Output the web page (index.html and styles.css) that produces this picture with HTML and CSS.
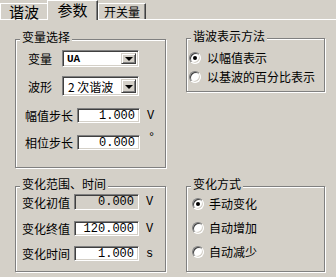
FILE: index.html
```html
<!DOCTYPE html>
<html lang="zh">
<head>
<meta charset="utf-8">
<title>参数</title>
<link rel="stylesheet" href="styles.css">
</head>
<body>
<div class="window">
  <div class="tabs">
    <div class="tab t1">谐波</div>
    <div class="tab t2 active">参数</div>
    <div class="tab t3">开关量</div>
  </div>
  <div class="panel">
    <div class="group g1">
      <span class="legend">变量选择</span>
      <div class="row r1a">
        <span class="lbl lbl-s">变量</span>
        <div class="combo c1"><span class="cval mono">UA</span><span class="cbtn"><i class="arrow"></i></span></div>
      </div>
      <div class="row r1b">
        <span class="lbl lbl-s">波形</span>
        <div class="combo c2"><span class="cval big">2 次谐波</span><span class="cbtn"><i class="arrow"></i></span></div>
      </div>
      <div class="row r1c">
        <span class="lbl lbl-l">幅值步长</span>
        <div class="edit e1 mono">1.000</div>
        <span class="unit mono">V</span>
      </div>
      <div class="row r1d">
        <span class="lbl lbl-l">相位步长</span>
        <div class="edit e1 mono">0.000</div>
        <span class="unit deg mono">°</span>
      </div>
    </div>
    <div class="group g2">
      <span class="legend">谐波表示方法</span>
      <div class="opt o2a"><span class="radio on"></span><span>以幅值表示</span></div>
      <div class="opt o2b"><span class="radio"></span><span>以基波的百分比表示</span></div>
    </div>
    <div class="group g3">
      <span class="legend">变化范围、时间</span>
      <div class="row r3a">
        <span class="lbl lbl-m">变化初值</span>
        <div class="edit e3 disabled mono">0.000</div>
        <span class="unit mono">V</span>
      </div>
      <div class="row r3b">
        <span class="lbl lbl-m">变化终值</span>
        <div class="edit e3 mono">120.000</div>
        <span class="unit mono">V</span>
      </div>
      <div class="row r3c">
        <span class="lbl lbl-m">变化时间</span>
        <div class="edit e3 mono">1.000</div>
        <span class="unit mono">s</span>
      </div>
    </div>
    <div class="group g4">
      <span class="legend">变化方式</span>
      <div class="opt o4a"><span class="radio on"></span><span>手动变化</span></div>
      <div class="opt o4b"><span class="radio"></span><span>自动增加</span></div>
      <div class="opt o4c"><span class="radio"></span><span>自动减少</span></div>
    </div>
  </div>
</div>
</body>
</html>
```

FILE: styles.css
```css
* { box-sizing: border-box; }
html, body { margin: 0; padding: 0; }
body {
  background: #d4d0c8;
  font-family: "Noto Sans CJK SC", "Noto Sans CJK JP", sans-serif;
  font-size: 12px;
  color: #000;
}
.window { width: 336px; height: 277px; overflow: hidden; }

.mono { font-family: "Liberation Mono", "DejaVu Sans Mono", monospace; }

/* tabs */
.tabs {
  display: flex;
  align-items: flex-end;
  height: 19px;
  position: relative;
  z-index: 2;
}
.tab {
  height: 16px;
  text-align: center;
  border-top: 1px solid #fff;
  border-left: 1px solid #fff;
  border-right: 1px solid #404040;
  box-shadow: inset -1px 0 0 #808080;
  background: #d4d0c8;
  white-space: nowrap;
}
.t1 {
  width: 47px;
  font-size: 15px;
  line-height: 15px;
  border-right: none;
  box-shadow: none;
}
.t2 { width: 51px; font-size: 15px; }
.t3 { width: 48px; font-size: 12px; line-height: 15px; }
.tab.active {
  height: 20px;
  margin-bottom: -1px;
  line-height: 15px;
  padding-top: 1px;
}

/* panel */
.panel {
  border-top: 1px solid #fff;
  padding: 19px 0 0 15px;
  display: grid;
  grid-template-columns: 151px 139px;
  grid-template-rows: 129px 86px;
  column-gap: 20px;
  row-gap: 18px;
  align-items: start;
}

.group {
  position: relative;
  border: 1px solid #808080;
  box-shadow: inset 1px 1px 0 #fff, 1px 1px 0 #fff;
  display: flex;
  flex-direction: column;
}
.g1 { height: 129px; }
.g2 { height: 54px; margin-top: -1px; }
.g3, .g4 { height: 86px; }

.legend {
  position: absolute;
  top: -10px;
  left: 4px;
  padding: 0 2px;
  line-height: 14px;
  background: #d4d0c8;
  white-space: nowrap;
}

/* rows */
.row { display: flex; align-items: center; }
.lbl { white-space: nowrap; }
.lbl-s { width: 34px; }
.lbl-l { width: 52px; }
.lbl-m { width: 52px; }

.r1a { margin-top: 10px; padding-left: 12px; height: 17px; }
.r1b { margin-top: 9px; padding-left: 12px; height: 20px; }
.r1c { margin-top: 12px; padding-left: 9px; height: 15px; }
.r1d { margin-top: 12px; padding-left: 9px; height: 15px; }

.r3a { margin-top: 7px; padding-left: 6px; height: 16px; }
.r3b { margin-top: 11px; padding-left: 6px; height: 15px; }
.r3c { margin-top: 10px; padding-left: 6px; height: 15px; }

/* sunken look */
.combo, .edit {
  background: #fff;
  border: 1px solid;
  border-color: #808080 #fff #fff #808080;
  box-shadow: inset 1px 1px 0 #404040, inset -1px -1px 0 #d4d0c8;
}

.combo {
  width: 77px;
  height: 100%;
  display: flex;
  align-items: stretch;
  padding: 2px;
}
.cval {
  flex: 1;
  min-width: 0;
  display: flex;
  align-items: center;
  padding-left: 2px;
  white-space: nowrap;
  overflow: hidden;
}
.c1 .cval { font-size: 11px; font-weight: bold; }
.c2 .cval { font-size: 12px; padding-left: 3px; }
.cbtn {
  width: 15px;
  flex: none;
  background: #d4d0c8;
  border: 1px solid;
  border-color: #d4d0c8 #404040 #404040 #d4d0c8;
  box-shadow: inset 1px 1px 0 #fff, inset -1px -1px 0 #808080;
  display: flex;
  align-items: center;
  justify-content: center;
}
.arrow {
  width: 0;
  height: 0;
  border-left: 4px solid transparent;
  border-right: 4px solid transparent;
  border-top: 4px solid #000;
  margin-top: 1px;
}

.edit {
  height: 100%;
  font-size: 12px;
  line-height: 13px;
  text-align: right;
  padding: 1px 4px 0 0;
}
.e1 { width: 63px; }
.e3 { width: 65px; }
.edit.disabled { background: #d4d0c8; }

.unit { font-size: 12px; margin-left: 7px; }
.deg { align-self: flex-start; margin-top: -4px; margin-left: 8px; }

/* radios */
.opt { display: flex; align-items: center; height: 13px; white-space: nowrap; }
.radio {
  width: 12px;
  height: 12px;
  flex: none;
  border-radius: 50%;
  background: #fff;
  border: 1px solid;
  border-color: #808080 #fff #fff #808080;
  box-shadow: inset 1px 1px 0 #404040, inset -1px -1px 0 #d4d0c8;
  display: flex;
  align-items: center;
  justify-content: center;
}
.radio.on::after {
  content: "";
  width: 4px;
  height: 4px;
  border-radius: 50%;
  background: #000;
}
.g2 .opt { padding-left: 2px; }
.g2 .radio { margin-right: 6px; }
.o2a { margin-top: 12px; }
.o2b { margin-top: 6px; }

.g4 .opt { padding-left: 5px; }
.g4 .radio { margin-right: 5px; }
.o4a { margin-top: 10px; }
.o4b { margin-top: 11px; }
.o4c { margin-top: 11px; }
```
